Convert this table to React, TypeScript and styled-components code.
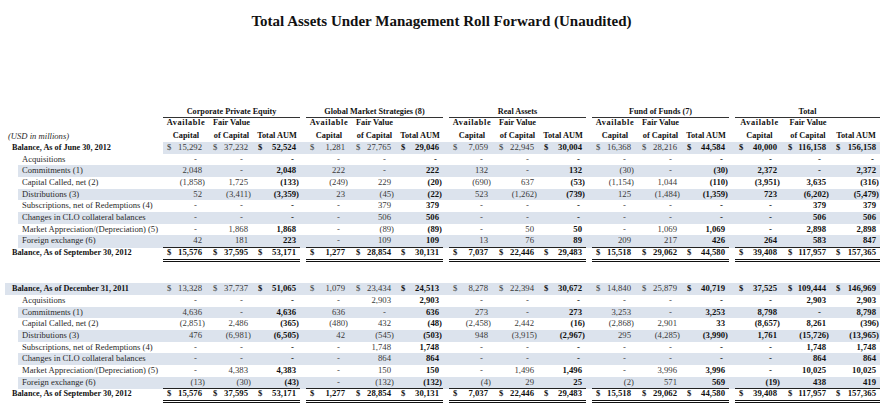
import React from "react";
import styled, { createGlobalStyle } from "styled-components";

const SHADE = "#dce3ed";
const ROW_H = 11.67;

const GlobalStyle = createGlobalStyle`
  body {
    margin: 0;
    background: #ffffff;
  }
`;

const Page = styled.div`
  width: 883px;
  height: 405px;
  overflow: hidden;
  box-sizing: border-box;
  padding-top: 12px;
  font-family: "Liberation Serif", "Times New Roman", serif;
  color: #1e1e1e;
`;

const Title = styled.h1`
  margin: 0 0 76px;
  font-size: 15px;
  line-height: 18px;
  font-weight: bold;
  text-align: center;
  color: #111;
`;

const Row = styled.div<{ $h?: number }>`
  display: grid;
  grid-template-columns: 163px 720px;
  height: ${(p) => p.$h ?? ROW_H}px;
  line-height: ${(p) => p.$h ?? ROW_H}px;
`;

const Label = styled.div<{ $indent: number; $pad: number; $bold?: boolean; $shade?: boolean; $italic?: boolean }>`
  margin-left: ${(p) => p.$indent}px;
  padding-left: ${(p) => p.$pad}px;
  background: ${(p) => (p.$shade ? SHADE : "transparent")};
  font-size: ${(p) => (p.$bold ? 8.2 : 8.6)}px;
  font-weight: ${(p) => (p.$bold ? "bold" : "normal")};
  font-style: ${(p) => (p.$italic ? "italic" : "normal")};
  white-space: nowrap;
  color: ${(p) => (p.$bold ? "#111" : "#2a2a2a")};
`;

const Groups = styled.div<{ $shade?: boolean }>`
  display: grid;
  grid-template-columns: repeat(4, 137px) 145px;
  column-gap: 6px;
  width: 717px;
  background: ${(p) => (p.$shade ? SHADE : "transparent")};
`;

const Group = styled.div<{ $rule?: "single" | "double"; $wide?: boolean }>`
  display: grid;
  grid-template-columns: ${(p) => (p.$wide ? "49px 48px 48px" : "46px 45px 46px")};
  box-sizing: border-box;
  height: 100%;
  border-bottom: ${(p) =>
    p.$rule === "single" ? "1px solid #222" : p.$rule === "double" ? "3px double #111" : "none"};
`;

const GroupTitle = styled.div`
  box-sizing: border-box;
  height: 100%;
  border-bottom: 1px solid #333;
  text-align: center;
  font-size: 8.2px;
  font-weight: bold;
  color: #111;
  white-space: nowrap;
`;

const SubHead = styled.div<{ $spaced?: boolean }>`
  text-align: center;
  font-size: 8.3px;
  font-weight: bold;
  letter-spacing: ${(p) => (p.$spaced ? 0.6 : 0)}px;
  color: #111;
  white-space: nowrap;
`;

const Cell = styled.div<{ $bold?: boolean; $right: number }>`
  display: flex;
  justify-content: space-between;
  padding: 0 ${(p) => p.$right}px 0 4px;
  font-size: 8.7px;
  font-weight: ${(p) => (p.$bold ? "bold" : "normal")};
  color: ${(p) => (p.$bold ? "#111" : "#3a3a3a")};
  white-space: nowrap;
`;

const Value = styled.span<{ $pad: number }>`
  padding-right: ${(p) => p.$pad}px;
`;

const Gap = styled.div`
  height: 24.8px;
`;

const GROUPS = [
  "Corporate Private Equity",
  "Global Market Strategies (8)",
  "Real Assets",
  "Fund of Funds (7)",
  "Total",
];

const ITEMS = [
  "Acquisitions",
  "Commitments (1)",
  "Capital Called, net (2)",
  "Distributions (3)",
  "Subscriptions, net of Redemptions (4)",
  "Changes in CLO collateral balances",
  "Market Appreciation/(Depreciation) (5)",
  "Foreign exchange (6)",
];

const CLOSE = "15,576 37,595 53,171 1,277 28,854 30,131 7,037 22,446 29,483 15,518 29,062 44,580 39,408 117,957 157,365";

const BLOCKS = [
  {
    open: "Balance, As of June 30, 2012",
    openShade: "data",
    openValues: "15,292 37,232 52,524 1,281 27,765 29,046 7,059 22,945 30,004 16,368 28,216 44,584 40,000 116,158 156,158",
    items: [
      "- - - - - - - - - - - - - - -",
      "2,048 - 2,048 222 - 222 132 - 132 (30) - (30) 2,372 - 2,372",
      "(1,858) 1,725 (133) (249) 229 (20) (690) 637 (53) (1,154) 1,044 (110) (3,951) 3,635 (316)",
      "52 (3,411) (3,359) 23 (45) (22) 523 (1,262) (739) 125 (1,484) (1,359) 723 (6,202) (5,479)",
      "- - - - 379 379 - - - - - - - 379 379",
      "- - - - 506 506 - - - - - - - 506 506",
      "- 1,868 1,868 - (89) (89) - 50 50 - 1,069 1,069 - 2,898 2,898",
      "42 181 223 - 109 109 13 76 89 209 217 426 264 583 847",
    ],
  },
  {
    open: "Balance, As of December 31, 2011",
    openShade: "full",
    openValues: "13,328 37,737 51,065 1,079 23,434 24,513 8,278 22,394 30,672 14,840 25,879 40,719 37,525 109,444 146,969",
    items: [
      "- - - - 2,903 2,903 - - - - - - - 2,903 2,903",
      "4,636 - 4,636 636 - 636 273 - 273 3,253 - 3,253 8,798 - 8,798",
      "(2,851) 2,486 (365) (480) 432 (48) (2,458) 2,442 (16) (2,868) 2,901 33 (8,657) 8,261 (396)",
      "476 (6,981) (6,505) 42 (545) (503) 948 (3,915) (2,967) 295 (4,285) (3,990) 1,761 (15,726) (13,965)",
      "- - - - 1,748 1,748 - - - - - - - 1,748 1,748",
      "- - - - 864 864 - - - - - - - 864 864",
      "- 4,383 4,383 - 150 150 - 1,496 1,496 - 3,996 3,996 - 10,025 10,025",
      "(13) (30) (43) - (132) (132) (4) 29 25 (2) 571 569 (19) 438 419",
    ],
  },
];

// right padding of each sub column inside a group
const COL_RIGHT = [4, 3, 1];

function Amount({ v, col }: { v: string; col: number }) {
  if (v === "-") return <Value $pad={col === 2 ? 5 : 8}>-</Value>;
  if (v.startsWith("(")) return <Value $pad={0}>{v}</Value>;
  return <Value $pad={3}>{v}</Value>;
}

function DataRow({
  label,
  values,
  kind,
  shade,
  rule,
}: {
  label: string;
  values: string;
  kind: "open" | "item" | "close";
  shade: "none" | "data" | "full";
  rule?: "single" | "double";
}) {
  const vals = values.split(" ");
  const balance = kind !== "item";
  return (
    <Row>
      <Label
        $indent={kind === "item" ? 18 : shade === "full" ? 5 : 0}
        $pad={kind === "item" ? 4 : shade === "full" ? 7 : 12}
        $bold={balance}
        $shade={shade === "full" || (kind === "item" && shade !== "none")}
      >
        {label}
      </Label>
      <Groups $shade={shade !== "none"}>
        {GROUPS.map((g, gi) => (
          <Group key={g} $rule={rule} $wide={gi === 4}>
            {[0, 1, 2].map((c) => (
              <Cell key={c} $right={COL_RIGHT[c]} $bold={kind === "close" || gi === 4 || c === 2}>
                <span>{balance ? "$" : ""}</span>
                <Amount v={vals[gi * 3 + c]} col={c} />
              </Cell>
            ))}
          </Group>
        ))}
      </Groups>
    </Row>
  );
}

function Header() {
  return (
    <>
      <Row $h={11}>
        <div />
        <Groups>
          {GROUPS.map((g) => (
            <GroupTitle key={g}>{g}</GroupTitle>
          ))}
        </Groups>
      </Row>
      <Row $h={12.5}>
        <div />
        <Groups>
          {GROUPS.map((g, gi) => (
            <Group key={g} $wide={gi === 4}>
              <SubHead $spaced>Available</SubHead>
              <SubHead>Fair Value</SubHead>
              <div />
            </Group>
          ))}
        </Groups>
      </Row>
      <Row $h={12.5}>
        <Label $indent={0} $pad={8} $italic>
          (USD in millions)
        </Label>
        <Groups>
          {GROUPS.map((g, gi) => (
            <Group key={g} $wide={gi === 4}>
              <SubHead>Capital</SubHead>
              <SubHead>of Capital</SubHead>
              <SubHead>Total AUM</SubHead>
            </Group>
          ))}
        </Groups>
      </Row>
    </>
  );
}

export default function App() {
  return (
    <Page>
      <GlobalStyle />
      <Title>Total Assets Under Management Roll Forward (Unaudited)</Title>
      {BLOCKS.map((b, bi) => (
        <React.Fragment key={b.open}>
          {bi === 0 ? <Header /> : <Gap />}
          <DataRow
            label={b.open}
            values={b.openValues}
            kind="open"
            shade={b.openShade as "data" | "full"}
          />
          {b.items.map((v, i) => (
            <DataRow
              key={ITEMS[i]}
              label={ITEMS[i]}
              values={v}
              kind="item"
              shade={i % 2 === 1 ? "data" : "none"}
              rule={i === ITEMS.length - 1 ? "single" : undefined}
            />
          ))}
          <DataRow
            label="Balance, As of September 30, 2012"
            values={CLOSE}
            kind="close"
            shade="none"
            rule="double"
          />
        </React.Fragment>
      ))}
    </Page>
  );
}
